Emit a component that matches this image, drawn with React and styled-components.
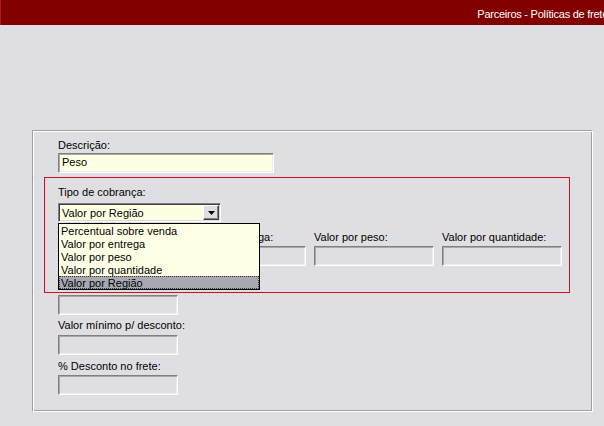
import React from 'react'
import styled, { createGlobalStyle } from 'styled-components'

const GlobalStyle = createGlobalStyle`
    html, body {
        margin: 0;
        padding: 0;
        background: #dfdfe3;
    }
    body {
        font-family: "Liberation Sans", Arial, sans-serif;
        font-size: 11px;
        color: #000;
    }
`

const Page = styled.div`
    width: 604px;
    height: 426px;
    overflow: hidden;
    background: #dfdfe3;
`

const TitleBar = styled.header`
    height: 25px;
    background: #800000;
    border-left: 1px solid #a02020;
    display: flex;
    justify-content: flex-end;
    overflow: hidden;
    box-sizing: border-box;
    padding-top: 3px;
`

const Title = styled.span`
    color: #fff;
    line-height: 22px;
    letter-spacing: -0.25px;
    white-space: nowrap;
    margin-right: -4px;
`

const Content = styled.main`
    padding: 105px 11px 0 32px;
`

const Panel = styled.section`
    position: relative;
    border: 1px solid;
    border-color: #a0a0a0 #fff #fff #a0a0a0;
    box-shadow: inset 1px 1px #fff, inset -1px -1px #a0a0a0;
    padding: 8px 25px 16px;
`

const Field = styled.div`
    margin-top: ${p => p.$top || 0}px;
`

const Label = styled.label`
    display: block;
    height: 13px;
    line-height: 13px;
    margin-bottom: ${p => p.$gap ?? 1}px;
    white-space: nowrap;
`

const TextBox = styled.div`
    box-sizing: border-box;
    width: ${p => p.$width || 120}px;
    height: 20px;
    line-height: 16px;
    padding: 0 3px;
    border: 1px solid;
    border-color: #808080 #fff #fff #808080;
    box-shadow: inset 1px 1px #a8a8a8, inset -1px -1px #ececec;
    background: ${p => (p.$enabled ? '#ffffe3' : '#dfdfe3')};
`

const Row = styled.div`
    display: grid;
    grid-template-columns: repeat(4, 120px);
    column-gap: 8px;
    margin-top: 9px;
`

const SelectWrap = styled.div`
    position: relative;
    width: 163px;
    z-index: 2;
`

const SelectBox = styled.div`
    box-sizing: border-box;
    height: 19px;
    display: flex;
    align-items: center;
    justify-content: space-between;
    padding: 1px 1px 0 3px;
    border: 1px solid;
    border-color: #808080 #fff #fff #808080;
    box-shadow: inset 1px 1px #404040, inset -1px -1px #d8d8d8;
    background: #ffffe3;
`

const ArrowButton = styled.span`
    box-sizing: border-box;
    width: 16px;
    height: 15px;
    margin-top: -1px;
    display: flex;
    align-items: center;
    justify-content: center;
    background: #dfdfe3;
    border: 1px solid;
    border-color: #fff #404040 #404040 #fff;
    box-shadow: inset -1px -1px #808080;
`

const DropList = styled.ul`
    position: absolute;
    top: calc(100% + 1px);
    left: 0;
    width: 200px;
    margin: 0;
    padding: 0;
    list-style: none;
    background: #ffffe6;
    border: 1px solid #000;
`

const Option = styled.li`
    box-sizing: border-box;
    height: 13px;
    line-height: 12px;
    padding: 1px 0 0 2px;
    white-space: nowrap;
    background: ${p => (p.$selected ? '#a7a9b0' : 'transparent')};
    outline: ${p => (p.$selected ? '1px dotted #333' : 'none')};
    outline-offset: -1px;
`

const Highlight = styled.div`
    position: absolute;
    left: 11px;
    top: 46px;
    width: 526px;
    height: 116px;
    box-sizing: border-box;
    border: 1px solid #d0101c;
    pointer-events: none;
    z-index: 1;
`

const options = [
    'Percentual sobre venda',
    'Valor por entrega',
    'Valor por peso',
    'Valor por quantidade',
    'Valor por Região',
]

const rowFields = [
    'Percentual sobre venda:',
    'Valor por entrega:',
    'Valor por peso:',
    'Valor por quantidade:',
]

export default function App() {
    return (
        <Page>
            <GlobalStyle />
            <TitleBar>
                <Title>Parceiros - Políticas de frete</Title>
            </TitleBar>
            <Content>
                <Panel>
                    <Highlight />
                    <Field>
                        <Label>Descrição:</Label>
                        <TextBox $enabled $width={216}>Peso</TextBox>
                    </Field>
                    <Field $top={13}>
                        <Label $gap={4}>Tipo de cobrança:</Label>
                        <SelectWrap>
                            <SelectBox>
                                <span>Valor por Região</span>
                                <ArrowButton>
                                    <svg width="7" height="4" viewBox="0 0 7 4">
                                        <path d="M0 0h7L3.5 4z" fill="#000" />
                                    </svg>
                                </ArrowButton>
                            </SelectBox>
                            <DropList>
                                {options.map(o => (
                                    <Option key={o} $selected={o === 'Valor por Região'}>{o}</Option>
                                ))}
                            </DropList>
                        </SelectWrap>
                    </Field>
                    <Row>
                        {rowFields.map(f => (
                            <Field key={f}>
                                <Label $gap={2}>{f}</Label>
                                <TextBox />
                            </Field>
                        ))}
                    </Row>
                    {/* label of this field sits under the open list */}
                    <Field $top={15}>
                        <Label />
                        <TextBox />
                    </Field>
                    <Field $top={4}>
                        <Label $gap={3}>Valor mínimo p/ desconto:</Label>
                        <TextBox />
                    </Field>
                    <Field $top={5}>
                        <Label $gap={2}>% Desconto no frete:</Label>
                        <TextBox />
                    </Field>
                </Panel>
            </Content>
        </Page>
    )
}
